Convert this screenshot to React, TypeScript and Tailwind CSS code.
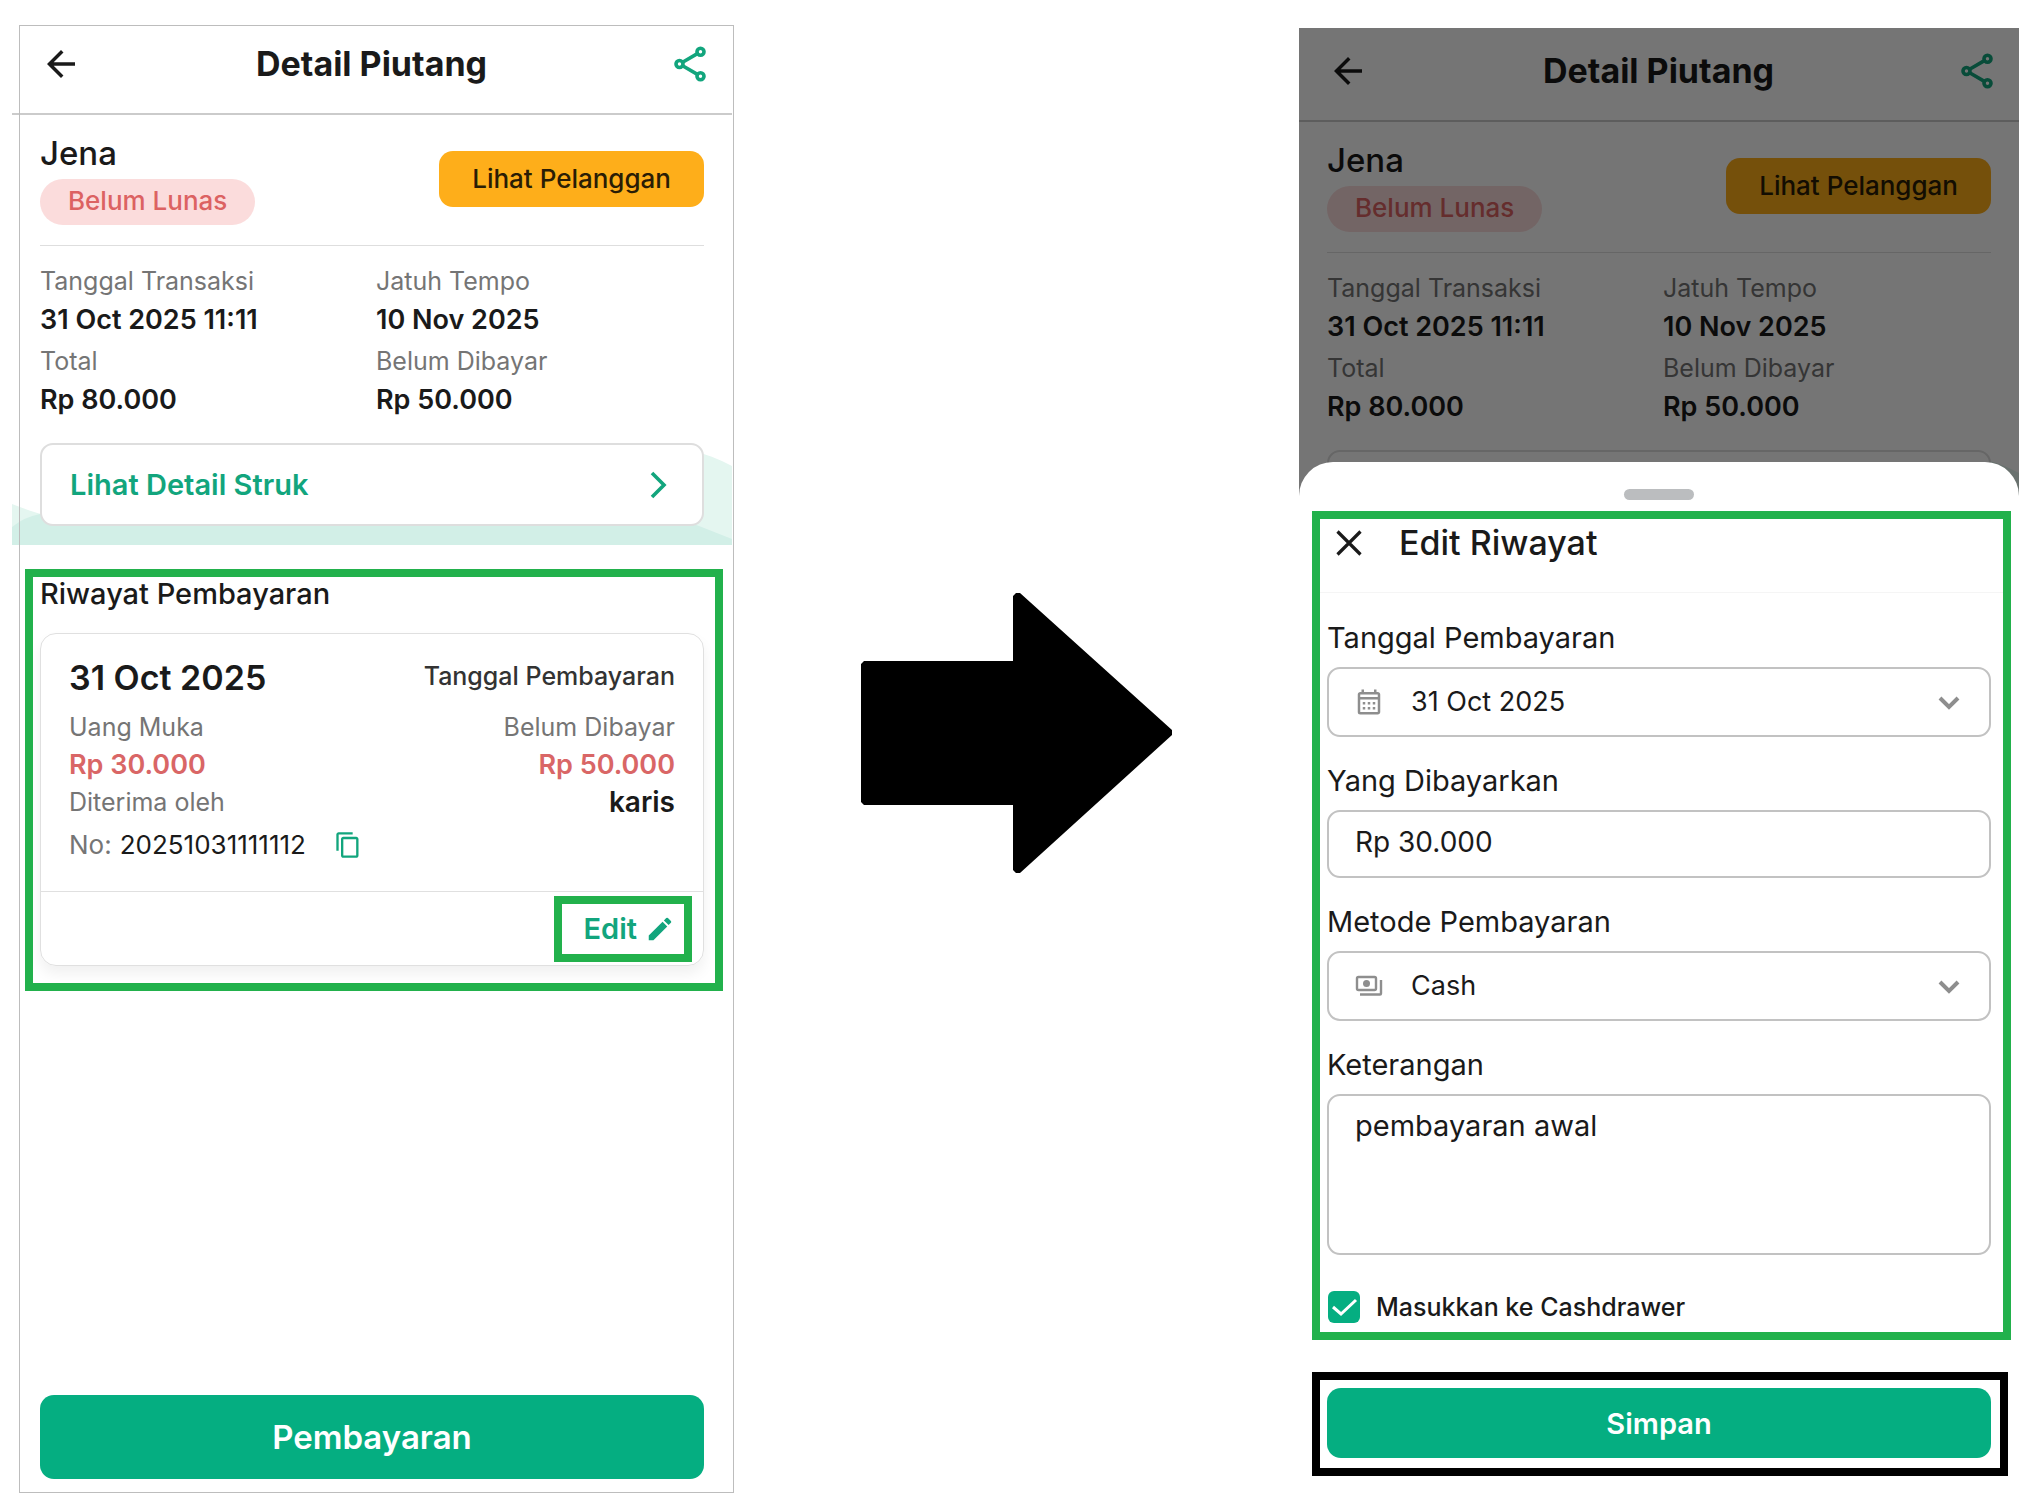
import type { ReactNode } from "react";
import {
  MdArrowBack,
  MdContentCopy,
  MdEdit,
  MdOutlineCalendarMonth,
} from "react-icons/md";

function Waves() {
  return (
    <svg
      className="absolute inset-x-0 bottom-0 h-[100px] w-full"
      viewBox="0 0 719 100"
      preserveAspectRatio="none"
      aria-hidden="true"
    >
      <path
        d="M0 59 C80 92 220 96 380 60 C520 22 630 -28 719 21 V100 H0 Z"
        fill="#e4f6f0"
      />
      <path
        d="M0 82 Q12 72 28 69 C240 20 480 20 650 68 Q685 80 719 94 V100 H0 Z"
        fill="#d2efe7"
      />
    </svg>
  );
}

function ShareIcon() {
  return (
    <svg width="42" height="42" viewBox="0 0 42 42" fill="none" stroke="currentColor" strokeWidth="3.6" aria-hidden="true">
      <circle cx="10.5" cy="21" r="3.5" />
      <circle cx="31.5" cy="8.8" r="3.5" />
      <circle cx="31.5" cy="33.2" r="3.5" />
      <path d="M13.6 19.2 L28.4 10.6 M13.6 22.8 L28.4 31.4" />
    </svg>
  );
}

function Fact({ label, value }: { label: string; value: string }) {
  return (
    <div>
      <dt className="text-[25px] leading-[38px] text-[#757575]">{label}</dt>
      <dd className="text-[27px] leading-[40px] font-semibold">{value}</dd>
    </div>
  );
}

function DebtSummary() {
  return (
    <>
      <header className="border-b-2 border-[#cbcbcb] px-7 pb-[6px]">
        <div className="flex h-[86px] items-center">
          <button aria-label="Kembali">
            <MdArrowBack size={42} />
          </button>
          <h1 className="mr-2 flex-1 text-center text-[34px] leading-[40px] font-bold">
            Detail Piutang
          </h1>
          <button aria-label="Bagikan" className="-mr-[7px] text-[#12a57d]">
            <ShareIcon />
          </button>
        </div>
      </header>
      <div className="relative px-7 pt-[18px] pb-[19px]">
        <Waves />
        <div className="relative">
          <div className="flex items-center justify-between border-b border-[#dedede] pb-5">
            <div>
              <h2 className="text-[33px] leading-[40px] font-medium">Jena</h2>
              <span className="mt-[6px] flex h-[46px] items-center rounded-full bg-[#fbdcdc] px-7 pb-1 text-[26px] font-medium text-[#dc6262]">
                Belum Lunas
              </span>
            </div>
            <button className="h-14 rounded-[14px] bg-[#feae1a] px-[33px] pb-[2px] text-[26px] font-medium text-[#2a1d05]">
              Lihat Pelanggan
            </button>
          </div>
          <dl className="mt-4 grid grid-cols-[336fr_328fr] gap-y-[2px]">
            <Fact label="Tanggal Transaksi" value="31 Oct 2025 11:11" />
            <Fact label="Jatuh Tempo" value="10 Nov 2025" />
            <Fact label="Total" value="Rp 80.000" />
            <Fact label="Belum Dibayar" value="Rp 50.000" />
          </dl>
          <button className="mt-[23px] flex h-[83px] w-full items-center justify-between rounded-[13px] border-2 border-[#dedede] bg-white px-7 text-[29px] font-semibold text-[#12a57d]">
            Lihat Detail Struk
            <svg width="32" height="32" viewBox="0 0 32 32" fill="none" stroke="currentColor" strokeWidth="3.6" aria-hidden="true">
              <path d="M10 4 L22 16 L10 28" />
            </svg>
          </button>
        </div>
      </div>
    </>
  );
}

function PaymentHistory() {
  return (
    <section className="mt-6 mr-[9px] ml-[13px] border-8 border-[#22b14c] pr-[11px] pb-[17px] pl-[7px]">
      <h2 className="text-[29px] leading-[33px] font-medium">Riwayat Pembayaran</h2>
      <article className="mt-[23px] rounded-[16px] border border-[#e0e0e0] shadow-[0_8px_14px_rgba(0,0,0,0.06)]">
        <div className="px-7 pt-[22px] pb-[26px]">
          <div className="flex justify-between">
            <h3 className="text-[34px] leading-[44px] font-semibold">31 Oct 2025</h3>
            <span className="text-[25px] leading-[40px] font-medium text-[#333]">
              Tanggal Pembayaran
            </span>
          </div>
          <div className="mt-2 flex justify-between text-[25px] leading-[38px] text-[#757575]">
            <span>Uang Muka</span>
            <span>Belum Dibayar</span>
          </div>
          <div className="flex justify-between text-[27px] leading-[38px] font-semibold text-[#d96666]">
            <span>Rp 30.000</span>
            <span>Rp 50.000</span>
          </div>
          <div className="flex justify-between leading-[36px]">
            <span className="text-[25px] text-[#757575]">Diterima oleh</span>
            <span className="text-[28px] font-semibold">karis</span>
          </div>
          <div className="mt-[5px] flex items-center text-[26px] leading-[40px]">
            <span className="mr-2 text-[#757575]">No:</span>
            <span>20251031111112</span>
            <button aria-label="Salin nomor" className="ml-7 text-[#12a57d]">
              <MdContentCopy size={28} />
            </button>
          </div>
        </div>
        <div className="flex justify-end border-t border-[#e0e0e0] pt-1 pr-[11px] pb-[3px]">
          <button className="flex h-[66px] items-center gap-2 border-8 border-[#22b14c] pr-[9px] pl-[22px] text-[29px] font-semibold text-[#12a57d]">
            Edit
            <MdEdit size={30} />
          </button>
        </div>
      </article>
    </section>
  );
}

function Field({ id, label, children }: { id: string; label: string; children: ReactNode }) {
  return (
    <div>
      <label htmlFor={id} className="mb-[9px] block text-[29px] leading-[40px]">
        {label}
      </label>
      {children}
    </div>
  );
}

function SelectBox({ id, icon, value }: { id: string; icon: ReactNode; value: string }) {
  return (
    <div className="flex h-[70px] items-center rounded-[13px] border-2 border-[#c2c2c2] pr-6 pl-[25px] text-[#8e8e8e]">
      {icon}
      <select id={id} className="ml-[27px] flex-1 appearance-none bg-transparent text-[27px] text-[#1a1a1a]">
        <option>{value}</option>
      </select>
      <svg className="pointer-events-none" width="32" height="32" viewBox="0 0 32 32" fill="none" stroke="currentColor" strokeWidth="4" aria-hidden="true">
        <path d="M7 12 L16 21 L25 12" />
      </svg>
    </div>
  );
}

function CashIcon() {
  return (
    <svg width="30" height="30" viewBox="0 0 30 30" fill="none" stroke="currentColor" strokeWidth="2.4" aria-hidden="true">
      <rect x="3" y="6" width="19" height="13" rx="1.5" />
      <circle cx="12.5" cy="12.5" r="3.5" fill="currentColor" stroke="none" />
      <path d="M27 9 V22.5 Q27 23.5 26 23.5 H6" />
    </svg>
  );
}

function EditSheet() {
  return (
    <div className="relative -mt-[90px] rounded-t-[34px] bg-white pt-[27px]">
      <div className="mx-auto h-[11px] w-[70px] rounded-full bg-[#bbbdbf]" />
      <form className="mt-[11px] mr-2 ml-[13px] border-8 border-[#22b14c] pr-3 pb-[9px] pl-[7px]">
        <div className="flex items-center gap-7 pb-[26px]">
          <button type="button" aria-label="Tutup">
            <svg width="44" height="44" viewBox="0 0 44 44" fill="none" stroke="currentColor" strokeWidth="3.2" aria-hidden="true">
              <path d="M10.5 10.5 L33.5 33.5 M33.5 10.5 L10.5 33.5" />
            </svg>
          </button>
          <h2 className="text-[34px] leading-[47px] font-medium">Edit Riwayat</h2>
        </div>
        <hr className="-mr-3 -ml-[7px] border-[#f5f5f5]" />
        <div className="mt-[25px] flex flex-col gap-6">
          <Field id="tanggal" label="Tanggal Pembayaran">
            <SelectBox id="tanggal" icon={<MdOutlineCalendarMonth size={30} />} value="31 Oct 2025" />
          </Field>
          <Field id="jumlah" label="Yang Dibayarkan">
            <input
              id="jumlah"
              defaultValue="Rp 30.000"
              className="block h-[68px] w-full rounded-[13px] border-2 border-[#c2c2c2] px-[26px] pb-1 text-[28px]"
            />
          </Field>
          <Field id="metode" label="Metode Pembayaran">
            <SelectBox id="metode" icon={<CashIcon />} value="Cash" />
          </Field>
          <Field id="keterangan" label="Keterangan">
            <textarea
              id="keterangan"
              defaultValue="pembayaran awal"
              className="block h-[161px] w-full resize-none rounded-[13px] border-2 border-[#c2c2c2] px-[26px] pt-[10px] text-[29px] leading-[40px]"
            />
          </Field>
        </div>
        <label className="mt-9 flex items-center text-[25px] leading-[32px] font-medium">
          <span className="relative mr-4 ml-px size-8">
            <input type="checkbox" defaultChecked className="block size-8 appearance-none rounded-md bg-[#05ae81]" />
            <svg className="pointer-events-none absolute inset-0" viewBox="0 0 32 32" fill="none" stroke="#fff" strokeWidth="3" aria-hidden="true">
              <path d="M5 16 L13 23 L28 9" />
            </svg>
          </span>
          Masukkan ke Cashdrawer
        </label>
      </form>
      <div className="mt-8 mr-[11px] ml-[13px] border-8 border-black pt-2 pr-[9px] pb-[10px] pl-[7px]">
        <button className="block h-[70px] w-full rounded-[14px] bg-[#05ae81] pt-[2px] text-[29px] font-semibold text-white">
          Simpan
        </button>
      </div>
    </div>
  );
}

export default function App() {
  return (
    <main className="grid min-h-screen grid-cols-[720fr_567fr_720fr] bg-white pr-[22px] pb-[13px] pl-3 font-['Inter',sans-serif] text-[#1a1a1a]">
      <div className="relative mt-[21px] flex flex-col">
        <DebtSummary />
        <PaymentHistory />
        <div className="mt-auto px-7 pb-[14px]">
          <button className="h-[84px] w-full rounded-[14px] bg-[#05ae81] pt-[2px] text-[33px] font-semibold text-white">
            Pembayaran
          </button>
        </div>
        <div className="pointer-events-none absolute top-1 -right-[2px] bottom-0 left-[7px] border border-[#bdbdbd]" />
      </div>
      <div className="flex justify-center pt-[593px] pl-[2px]">
        <svg className="h-[280px] w-[311px]" viewBox="0 0 311 280" aria-hidden="true">
          <path d="M0 71 L3 68 H152 V3 L155 0 H159 L311 137 V142 L159 280 H155 L152 277 V212 H3 L0 209 Z" fill="#000" />
        </svg>
      </div>
      <div className="mt-7">
        <div className="relative">
          <DebtSummary />
          <div className="absolute inset-0 bg-black/54" />
        </div>
        <EditSheet />
      </div>
    </main>
  );
}
